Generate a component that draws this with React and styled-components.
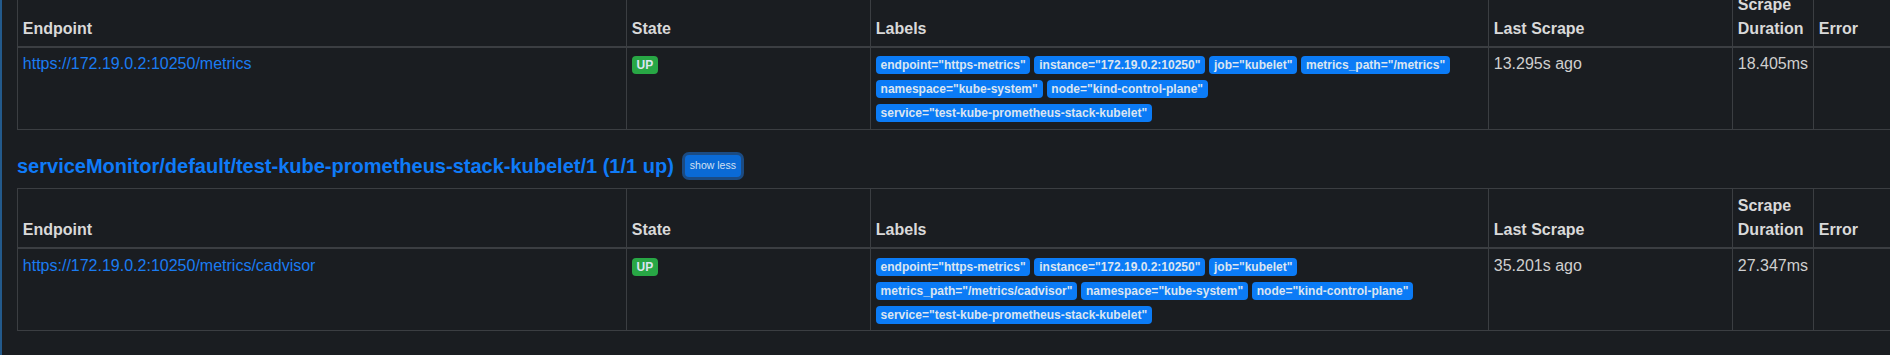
import React from "react"
import styled, { createGlobalStyle } from "styled-components"

const GlobalStyle = createGlobalStyle`
  html,
  body {
    margin: 0;
    padding: 0;
    background: #1a1d21;
    overflow: hidden;
  }
  body {
    font-family: "Liberation Sans", Arial, sans-serif;
    font-size: 16px;
    line-height: 1.5;
    color: #d0d0d0;
  }
`

const Page = styled.div`
  display: flex;
  flex-direction: column;
  min-height: 100vh;
  box-sizing: border-box;
  border-left: 2px solid #235a8c;
  padding-left: 15px;
`

// page is scrolled a little: the first pool's title sits above the fold
const Scrolled = styled.div`
  margin-top: -71px;
`

const TitleRow = styled.div`
  display: flex;
  align-items: center;
  height: 30px;
  margin: 21px 0 7px;
`

const PoolLink = styled.a`
  font-size: 20px;
  font-weight: 700;
  line-height: 30px;
  color: #0f7bf8;
  text-decoration: none;
  white-space: nowrap;
`

const ToggleButton = styled.button`
  margin-left: 11px;
  padding: 3px 5px;
  font-family: "Liberation Sans", Arial, sans-serif;
  font-size: 10.5px;
  line-height: 1.5;
  color: #d3e0f2;
  background: #0a6ad6;
  border: 0;
  border-radius: 4px;
  box-shadow: 0 0 0 3px #1b4b83;
  cursor: pointer;
`

const Table = styled.table`
  border-collapse: collapse;
  table-layout: fixed;
  width: 2496px;
`

const Th = styled.th`
  box-sizing: border-box;
  width: ${p => p.$w}px;
  padding: 4.8px;
  text-align: left;
  vertical-align: bottom;
  font-weight: 700;
  color: #d9d9d9;
  border: 1px solid #3b3e42;
  border-bottom-width: 2px;
`

const Td = styled.td`
  box-sizing: border-box;
  padding: 4.8px;
  vertical-align: top;
  color: #cfcfcf;
  border: 1px solid #3b3e42;
  word-break: break-all;
`

const EndpointLink = styled.a`
  color: #1a7cf2;
  text-decoration: none;
`

const Badge = styled.span`
  display: inline-block;
  margin-right: 4px;
  padding: 0.25em 0.4em;
  font-size: 75%;
  font-weight: 700;
  line-height: 1;
  white-space: nowrap;
  border-radius: 4px;
  color: #dbe5f1;
  background: ${p => (p.$up ? "#28a745" : "#0b7bf6")};
`

const baseLabels = metricsPath => [
  ["endpoint", "https-metrics"],
  ["instance", "172.19.0.2:10250"],
  ["job", "kubelet"],
  ["metrics_path", metricsPath],
  ["namespace", "kube-system"],
  ["node", "kind-control-plane"],
  ["service", "test-kube-prometheus-stack-kubelet"],
]

const pools = [
  {
    name: "serviceMonitor/default/test-kube-prometheus-stack-kubelet/0",
    up: 1,
    total: 1,
    target: {
      endpoint: "https://172.19.0.2:10250/metrics",
      labels: baseLabels("/metrics"),
      lastScrape: "13.295s ago",
      duration: "18.405ms",
    },
  },
  {
    name: "serviceMonitor/default/test-kube-prometheus-stack-kubelet/1",
    up: 1,
    total: 1,
    target: {
      endpoint: "https://172.19.0.2:10250/metrics/cadvisor",
      labels: baseLabels("/metrics/cadvisor"),
      lastScrape: "35.201s ago",
      duration: "27.347ms",
    },
  },
]

const columns = [
  ["Endpoint", 609],
  ["State", 244],
  ["Labels", 618],
  ["Last Scrape", 244],
  ["Scrape Duration", 81],
  ["Error", 700],
]

const ScrapePool = ({ pool }) => {
  const t = pool.target
  return (
    <section>
      <TitleRow>
        <PoolLink href={`#pool-${pool.name}`}>
          {pool.name} ({pool.up}/{pool.total} up)
        </PoolLink>
        <ToggleButton type="button">show less</ToggleButton>
      </TitleRow>
      <Table>
        <thead>
          <tr>
            {columns.map(([label, w]) => (
              <Th key={label} $w={w}>
                {label}
              </Th>
            ))}
          </tr>
        </thead>
        <tbody>
          <tr>
            <Td>
              <EndpointLink href={t.endpoint}>{t.endpoint}</EndpointLink>
            </Td>
            <Td>
              <Badge $up>UP</Badge>
            </Td>
            <Td>
              {t.labels.map(([k, v]) => (
                <Badge key={k}>{`${k}="${v}"`}</Badge>
              ))}
            </Td>
            <Td>{t.lastScrape}</Td>
            <Td>{t.duration}</Td>
            <Td />
          </tr>
        </tbody>
      </Table>
    </section>
  )
}

const App = () => (
  <>
    <GlobalStyle />
    <Page>
      <Scrolled>
        {pools.map(p => (
          <ScrapePool key={p.name} pool={p} />
        ))}
      </Scrolled>
    </Page>
  </>
)

export default App
